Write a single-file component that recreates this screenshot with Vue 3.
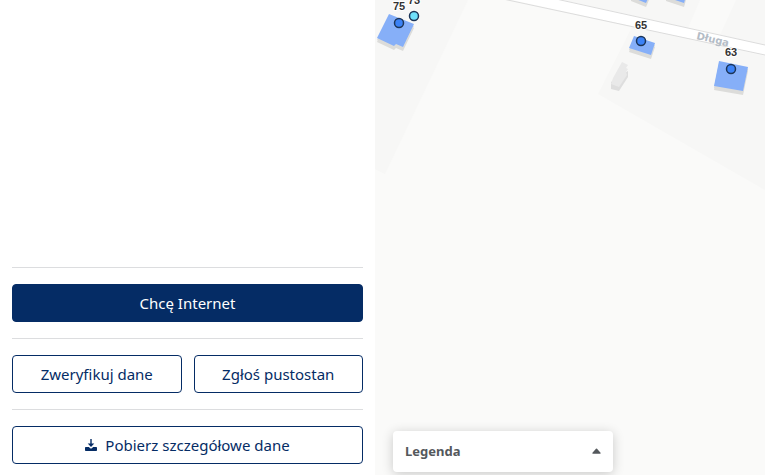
<script setup>
const buildings = [
  { id: 'b75', points: '14,14 39,24 28,47 21,44 19,46 2,38' },
  { id: 'b65', points: '259,36 280,43 276,55 254,48' },
  { id: 'b63', points: '344,61 373,67 368,91 339,86' },
  { id: 'north-west', points: '256,-4 274,-4 271,3 256,-3' },
  { id: 'north-east', points: '291,-4 311,-4 309,3 291,-3' },
]

const addresses = [
  { number: '73', x: 39, y: 16, labelY: 4, color: '#6fe0fb' },
  { number: '75', x: 24, y: 23, labelY: 10, color: '#3b82f6' },
  { number: '65', x: 266, y: 41, labelY: 29, color: '#3b82f6' },
  { number: '63', x: 356, y: 69, labelY: 56, color: '#3b82f6' },
]
</script>

<template>
  <main class="page">
    <aside class="panel">
      <hr class="divider" />
      <button type="button" class="btn btn-primary">Chcę Internet</button>
      <hr class="divider" />
      <div class="pair">
        <button type="button" class="btn">Zweryfikuj dane</button>
        <button type="button" class="btn">Zgłoś pustostan</button>
      </div>
      <hr class="divider" />
      <button type="button" class="btn">
        <svg class="icon" viewBox="0 0 12 12" aria-hidden="true">
          <path d="M5.3 0h1.4v4.6h2.6L6 8 2.7 4.6h2.6z" />
          <path d="M0.8 8H3.8l1.4 1.3q0.8 0.6 1.6 0L8.2 8h3q0.8 0 0.8 0.8v2.4q0 0.8-0.8 0.8H0.8Q0 12 0 11.2V8.8Q0 8 0.8 8z" />
        </svg>
        <span>Pobierz szczegółowe dane</span>
      </button>
    </aside>

    <section class="map">
      <svg class="canvas" viewBox="0 0 390 475" preserveAspectRatio="xMinYMin slice">
        <g class="land">
          <path d="M0 0H93L10 174 0 169z" />
          <path d="M186 0H325L313 28z" />
          <path d="M361 0H390V45L345 35z" />
          <path d="M257 27L390 56V190L223 94z" />
        </g>
        <path class="road" d="M128-2L390 55V45L178-2z" />
        <path class="road-edge" d="M128-1L390 55M181-1L390 45" />
        <path class="shed-side" d="M236 82L236 89 244 91 253 77V71z" />
        <path class="shed" d="M247 62L253 65 251 68 253 69 251 72 252 75 244 87 236 84 238 78z" />
        <g v-for="b in buildings" :key="b.id">
          <polygon class="shade" :points="b.points" transform="translate(0 4)" />
          <polygon class="shade" :points="b.points" transform="translate(0 2)" />
          <polygon class="roof" :points="b.points" />
        </g>
        <text class="street" transform="translate(321 39) rotate(13)">Długa</text>
        <g v-for="a in addresses" :key="a.number">
          <circle class="pin" :cx="a.x" :cy="a.y" r="4.5" :fill="a.color" />
          <text class="number" :x="a.x" :y="a.labelY">{{ a.number }}</text>
        </g>
      </svg>
      <button type="button" class="legend">
        <span>Legenda</span>
        <svg class="caret" viewBox="0 0 10 6" aria-hidden="true">
          <path d="M1 6Q0 6 0.5 5L4.4 0.5Q5 0 5.6 0.5L9.5 5Q10 6 9 6z" />
        </svg>
      </button>
    </section>
  </main>
</template>

<style>
body {
  margin: 0;
}
</style>

<style scoped>
.page {
  display: grid;
  grid-template-columns: 25fr 26fr;
  min-height: 100vh;
  background: #fff;
  font-family: "Segoe UI", "Noto Sans", "Open Sans", sans-serif;
}

.panel {
  display: flex;
  flex-direction: column;
  justify-content: flex-end;
  gap: 16px;
  min-width: 0;
  padding: 11px 12px;
}

.divider {
  width: 100%;
  height: 1px;
  margin: 0;
  border: 0;
  background: #dcdddf;
}

.pair {
  display: grid;
  grid-template-columns: 1fr 1fr;
  gap: 12px;
}

.btn {
  display: flex;
  align-items: center;
  justify-content: center;
  gap: 8px;
  box-sizing: border-box;
  height: 38px;
  padding: 0 12px;
  border: 1px solid #052c65;
  border-radius: 4px;
  background: #fff;
  color: #052c65;
  font: inherit;
  font-size: 15px;
  line-height: 24px;
  white-space: nowrap;
  cursor: pointer;
}

.btn-primary {
  background: #052c65;
  color: #fff;
}

.icon {
  width: 12px;
  height: 12px;
  fill: currentColor;
}

.map {
  position: relative;
  min-width: 0;
  overflow: hidden;
  background: #fafaf9;
}

.canvas {
  position: absolute;
  inset: 0;
  width: 100%;
  height: 100%;
}

.land {
  fill: #f7f7f6;
}

.road {
  fill: #fff;
}

.road-edge {
  fill: none;
  stroke: #dcdcdc;
}

.shade {
  fill: #dcdcda;
}

.roof {
  fill: #86aff8;
}

.shed {
  fill: #e9e9e9;
}

.shed-side {
  fill: #dedede;
}

.pin {
  stroke: #1c3558;
  stroke-width: 1.5;
}

.number {
  fill: #333;
  stroke: #fff;
  stroke-width: 2px;
  paint-order: stroke;
  font: bold 11px "Liberation Sans", Arial, sans-serif;
  text-anchor: middle;
}

.street {
  fill: #b4bcc6;
  font: bold 10px "DejaVu Sans", sans-serif;
}

.legend {
  position: absolute;
  bottom: 3px;
  left: 18px;
  display: flex;
  align-items: center;
  justify-content: space-between;
  box-sizing: border-box;
  width: 220px;
  height: 41px;
  padding: 0 12px 2px;
  border: 0;
  border-radius: 4px;
  background: #fff;
  box-shadow: 0 2px 12px rgba(0, 0, 0, 0.2);
  color: #54585c;
  font: inherit;
  font-size: 13px;
  font-weight: 700;
  cursor: pointer;
}

.caret {
  width: 9px;
  height: 6px;
  fill: currentColor;
}
</style>
